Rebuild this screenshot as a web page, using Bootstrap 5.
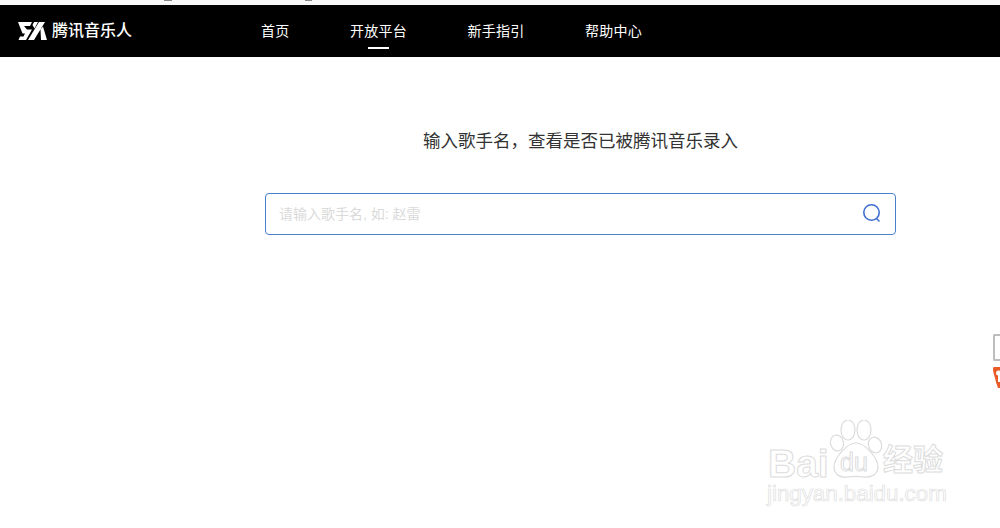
<!DOCTYPE html>
<html lang="zh"><head><meta charset="utf-8"><title>腾讯音乐人</title>
<link href="https://cdn.jsdelivr.net/npm/bootstrap@5.3.0/dist/css/bootstrap.min.css" rel="stylesheet">
<style>
html,body{height:528px;overflow:hidden;background:#fff}
body{position:relative;font-family:"Liberation Sans","Noto Sans CJK SC",sans-serif;color:#333}
.top-strip{height:5px;background:linear-gradient(#888,#888) 164px 0/8px 1px no-repeat,linear-gradient(#888,#888) 305px 0/7px 1px no-repeat,#f8f8f8}
.tme-bar{height:52px;background:#000;padding-left:18px}
.tme-brand{width:243px;gap:5px;color:#fff;font-size:16px;font-weight:500;text-decoration:none;line-height:1}
.tme-links{gap:60.5px;height:100%}
.tme-link{position:relative;color:#fff;font-size:14px;text-decoration:none;padding-top:1px;display:flex;align-items:center;height:100%;letter-spacing:.25px}
.tme-link.on::after{content:"";position:absolute;left:18px;right:18px;bottom:8px;height:2px;background:#fff}
.query-wrap{width:631px;margin-left:265px;padding-top:73px}
.query-title{font-size:17.5px;line-height:22px;color:#333;text-align:center;margin:0 0 41px;font-weight:400}
.query-box{height:42px;border:1px solid #4a7fc9;border-radius:4px;padding:0 13px;background:#fff}
.query-box input{border:0;outline:0;flex:1;font-size:14px;padding:0;color:#333;background:transparent}
.query-box input::placeholder{color:#dadada;opacity:1}
.edge-box{position:absolute;right:0;top:334px;width:7px;height:27px;border:2px solid #bdbdbd;border-right:0;border-radius:2px 0 0 2px;background:#fff}
.edge-tag{position:absolute;right:0;top:367px}
.wm{position:absolute;left:765px;top:420px;width:185px;height:90px}
.wm-t{position:absolute;color:#fff;-webkit-text-stroke:1px #dcdcdc;white-space:nowrap;line-height:1}
.wm-bai{left:3px;top:24px;font-size:39px;font-weight:700}
.wm-du{left:75px;top:30px;font-size:25px}
.wm-jy{left:118px;top:25px;font-size:30px;font-weight:700;letter-spacing:0}
.wm-url{left:2px;top:63px;font-size:22.300px;-webkit-text-stroke:.7px #dedede}
</style></head>
<body>
<div class="top-strip"></div>
<nav class="tme-bar d-flex align-items-center">
  <a class="tme-brand d-flex align-items-center" href="#">
    <svg width="29" height="18" viewBox="0 0 29 18" fill="#fff" aria-hidden="true"><path d="M0 0H14L12 4H6L9 7.500H14L8 18H.5L2 14.500H5.500L7 11.500H4.500ZM21 0H27L16 18H10ZM16 0H20L16.500 6.500 14.500 3ZM22.500 7.500 25 4.500 29 18H23Z"/></svg>
    <span>腾讯音乐人</span>
  </a>
  <div class="tme-links d-flex">
    <a class="tme-link" href="#">首页</a>
    <a class="tme-link on" href="#">开放平台</a>
    <a class="tme-link" href="#">新手指引</a>
    <a class="tme-link" href="#">帮助中心</a>
  </div>
</nav>
<main class="query-wrap">
  <h1 class="query-title">输入歌手名，查看是否已被腾讯音乐录入</h1>
  <div class="query-box d-flex align-items-center">
    <input type="text" placeholder="请输入歌手名, 如: 赵雷">
    <svg width="20" height="20" viewBox="0 0 20 20" fill="none" stroke="#3f6fd0" stroke-width="1.600" aria-hidden="true"><circle cx="9.500" cy="8.500" r="7.700"/><path d="M14.500 14.500l2.500 2.500" stroke-linecap="round"/></svg>
  </div>
</main>
<div class="edge-box"></div>
<svg class="edge-tag" width="7" height="21" viewBox="0 0 7 21" aria-hidden="true"><path d="M1 0H7V21H5Q3 16 2 11Q0 5 0 2Q0 0 1 0Z" fill="#ea5a26"/><circle cx="5.500" cy="6" r="2.500" fill="#fff"/><rect x="5" y="8" width="2" height="7" fill="#fff"/></svg>
<div class="wm" aria-hidden="true">
  <svg width="185" height="60" viewBox="0 0 185 60" class="position-absolute top-0 start-0" fill="#fff" stroke="#dcdcdc" stroke-width="1.200">
    <ellipse cx="72" cy="23" rx="6.500" ry="8" transform="rotate(-15 72 23)"/>
    <ellipse cx="83" cy="10" rx="7" ry="10"/>
    <ellipse cx="99" cy="10" rx="7" ry="10"/>
    <ellipse cx="110" cy="25" rx="6.500" ry="8" transform="rotate(-20 110 25)"/>
    <path d="M91 23C100 23 113 38 113 47C113 55 105 58 98 57C92 56 88 56 83 57C76 58 69 55 69 47C69 38 82 23 91 23Z"/>
  </svg>
  <span class="wm-t wm-bai">Bai</span>
  <span class="wm-t wm-du">du</span>
  <span class="wm-t wm-jy">经验</span>
  <span class="wm-t wm-url">jingyan.baidu.com</span>
</div>
<script src="https://cdn.jsdelivr.net/npm/bootstrap@5.3.0/dist/js/bootstrap.bundle.min.js"></script>
</body></html>
